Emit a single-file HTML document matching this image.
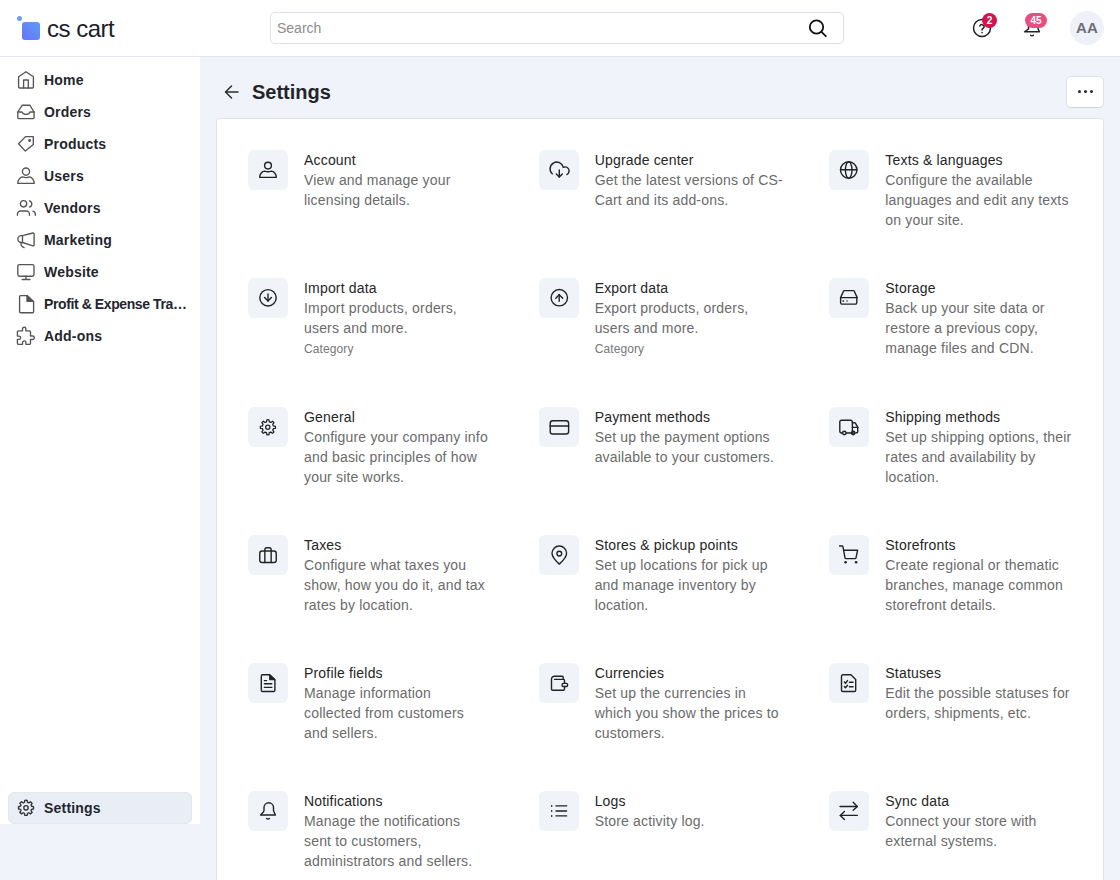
<!DOCTYPE html>
<html><head><meta charset="utf-8"><style>
*{box-sizing:border-box;margin:0;padding:0}
html,body{width:1120px;height:880px;overflow:hidden;background:#f0f3fa;font-family:"Liberation Sans",sans-serif;color:#222}
.a{position:absolute}
.hdr{left:0;top:0;width:1120px;height:57px;background:#fff;border-bottom:1px solid #e1e5ec}
.side{left:0;top:57px;width:200px;height:767px;background:#fff}
.nav{position:absolute;left:0;width:200px;height:32px}
.nav .ic{position:absolute;left:14px;top:4px;width:24px;height:24px;color:#555}
.nav svg{display:block}
.nav .tx{position:absolute;left:44px;top:0;line-height:32px;font-size:14px;font-weight:700;color:#23262e;white-space:nowrap;overflow:hidden;text-overflow:ellipsis;width:150px;letter-spacing:.2px}
.active{left:8px;top:792px;width:184px;height:32px;border-radius:6px;background:#e9eef6;border:1px solid #e3e8f0}
.card{left:216px;top:118px;width:888px;height:800px;background:#fff;border:1px solid #dfe2e8;border-radius:4px}
.it{position:absolute;width:243px;height:90px}
.ib{position:absolute;left:0;top:0;width:40px;height:40px;border-radius:6px;background:#f0f3f8;color:#222}
.ib svg{position:absolute;left:8px;top:8px}
.t{position:absolute;left:56px;top:0;font-size:14px;line-height:20px;white-space:nowrap;letter-spacing:.18px}
.ti{color:#262626}
.d{color:#6b6b6b}
.c{color:#777;font-size:12px;position:relative;top:1px;letter-spacing:.1px}
</style></head><body>
<div class="a hdr"></div>
<div class="a" style="left:16.6px;top:15.9px;width:5.6px;height:5.6px;border-radius:50%;background:#6d9bf7"></div>
<div class="a" style="left:22px;top:22px;width:18px;height:18px;border-radius:3px;background:linear-gradient(45deg,#6a72f5 0%,#5b9ef8 100%)"></div>
<div class="a" style="left:47px;top:14px;font-size:24px;line-height:30px;color:#1b1d2b;letter-spacing:-0.5px">cs cart</div>
<div class="a" style="left:270px;top:12px;width:574px;height:32px;border:1px solid #dde1e7;border-radius:5px;background:#fff"></div>
<div class="a" style="left:277px;top:12px;line-height:32px;font-size:14px;color:#8c8c8c">Search</div>
<svg class="a" style="left:807px;top:17px" width="22" height="22" viewBox="0 0 22 22" fill="none" stroke="#111" stroke-width="1.8" stroke-linecap="round"><circle cx="9.5" cy="10" r="6.7"/><path d="M14.4 14.9l4.4 4.3"/></svg>
<svg class="a" style="left:972px;top:18px" width="20" height="20" viewBox="0 0 20 20" fill="none" stroke="#222" stroke-width="1.5" stroke-linecap="round"><circle cx="10" cy="10" r="8.5"/><path d="M7.8 8a2.3 2.3 0 0 1 4.4.8c0 1.4-2.2 1.8-2.2 3.2"/><path d="M10 14.6v.1"/></svg>
<div class="a" style="left:982px;top:13px;width:15px;height:15px;border-radius:50%;background:#d4134f;color:#fff;font-size:10px;font-weight:700;line-height:15px;text-align:center">2</div>
<svg class="a" style="left:1022px;top:14px" width="20" height="24" viewBox="0 0 20 24" fill="none" stroke="#222" stroke-width="1.5" stroke-linecap="round" stroke-linejoin="round"><path d="M2.6 17.8h14.8l-1.3-2.8V10.5a4.8 4.8 0 0 0-9.6 0v4.5z"/><path d="M8.6 21.2q1.4 1.2 2.8 0"/></svg>
<div class="a" style="left:1025px;top:13px;width:22px;height:15px;border-radius:8px;background:#ec4d80;color:#fff;font-size:10px;font-weight:700;line-height:15px;text-align:center">45</div>
<div class="a" style="left:1070px;top:11px;width:34px;height:34px;border-radius:50%;background:#eef1f7;color:#6b6e73;font-size:15px;font-weight:700;line-height:34px;text-align:center;letter-spacing:.2px">AA</div>
<svg class="a" style="left:222px;top:82px" width="20" height="20" viewBox="0 0 20 20" fill="none" stroke="#2a2a2a" stroke-width="1.45" stroke-linecap="round" stroke-linejoin="round"><path d="M4 10h12"/><path d="M9.5 4L3.5 10l6 6"/></svg>
<div class="a" style="left:252px;top:78px;font-size:20px;font-weight:700;line-height:28px;color:#23252b">Settings</div>
<div class="a" style="left:1066px;top:76px;width:38px;height:32px;border:1px solid #dde1e8;border-bottom-color:#cfd4dc;border-radius:5px;background:#fff"></div>
<div class="a" style="left:1077.5px;top:90.3px;width:3.2px;height:3.2px;border-radius:50%;background:#2a2a2a;box-shadow:6px 0 0 #2a2a2a,12px 0 0 #2a2a2a"></div>

<div class="a side"></div>
<div class="nav" style="top:64px"><span class="ic"><svg width="24" height="24" viewBox="0 0 24 24" fill="none" stroke="currentColor" stroke-width="1.35" stroke-linecap="round" stroke-linejoin="round"><path d="M4.6 19V8.8L12 3.8l7.4 5V19a1 1 0 0 1-1 1H5.6a1 1 0 0 1-1-1z"/><path d="M9.6 20v-8h4.7v8"/></svg></span><span class="tx">Home</span></div>
<div class="nav" style="top:96px"><span class="ic"><svg width="24" height="24" viewBox="0 0 24 24" fill="none" stroke="currentColor" stroke-width="1.35" stroke-linecap="round" stroke-linejoin="round"><path d="M3.8 12l4.5-6.8h7.4l4.4 6.8v5.6a1 1 0 0 1-1 1H4.8a1 1 0 0 1-1-1z"/><path d="M3.8 12H8q1 2.4 4 2.4t4-2.4h4.1"/></svg></span><span class="tx">Orders</span></div>
<div class="nav" style="top:128px"><span class="ic"><svg width="24" height="24" viewBox="0 0 24 24" fill="none" stroke="currentColor" stroke-width="1.35" stroke-linecap="round" stroke-linejoin="round"><path d="M11.5 4.6h7.8v7.9l-8 6.6-6.7-7.4z"/><circle cx="15.6" cy="8.4" r=".8" fill="currentColor"/></svg></span><span class="tx">Products</span></div>
<div class="nav" style="top:160px"><span class="ic"><svg width="24" height="24" viewBox="0 0 24 24" fill="none" stroke="currentColor" stroke-width="1.35" stroke-linecap="round" stroke-linejoin="round"><circle cx="12" cy="7.6" r="3.6"/><path d="M3.8 19.4c0-3.6 2.5-6.5 4.9-6.5q3.3 1.4 6.6 0c2.4 0 4.9 2.9 4.9 6.5z"/></svg></span><span class="tx">Users</span></div>
<div class="nav" style="top:192px"><span class="ic"><svg width="24" height="24" viewBox="0 0 24 24" fill="none" stroke="currentColor" stroke-width="1.35" stroke-linecap="round" stroke-linejoin="round"><circle cx="9.55" cy="7.8" r="3.15"/><path d="M15.5 4.8a3.3 3.3 0 0 1 0 6.3"/><path d="M3.45 19.3V18a3 3 0 0 1 3-3h6a3 3 0 0 1 3 3v1.3"/><path d="M18.9 15.1a3.2 3.2 0 0 1 2.4 3.1v1.1"/></svg></span><span class="tx">Vendors</span></div>
<div class="nav" style="top:224px"><span class="ic"><svg width="24" height="24" viewBox="0 0 24 24" fill="none" stroke="currentColor" stroke-width="1.35" stroke-linecap="round" stroke-linejoin="round"><path d="M8.5 7.6l10.4-2.6a1 1 0 0 1 1.2 1v10.9a1 1 0 0 1-1.2 1L8.5 14.5z"/><path d="M8.5 7.6H7.3a3.45 3.45 0 0 0 0 6.9h1.2"/><path d="M6.9 14.6c0 2.6 1 4.4 3.2 5"/></svg></span><span class="tx">Marketing</span></div>
<div class="nav" style="top:256px"><span class="ic"><svg width="24" height="24" viewBox="0 0 24 24" fill="none" stroke="currentColor" stroke-width="1.35" stroke-linecap="round" stroke-linejoin="round"><rect x="3.8" y="4.6" width="16.2" height="11.6" rx="1.6"/><path d="M12 16.2v3.3M8.2 19.5h7.8"/></svg></span><span class="tx">Website</span></div>
<div class="nav" style="top:288px"><span class="ic"><svg width="24" height="24" viewBox="0 0 24 24" fill="none" stroke="currentColor" stroke-width="1.35" stroke-linecap="round" stroke-linejoin="round"><path d="M13 3.6H6.6a1 1 0 0 0-1 1v15.1a1 1 0 0 0 1 1h12a1 1 0 0 0 1-1V9.4z"/><path d="M13 3.6v5.8h5.9z" fill="currentColor"/></svg></span><span class="tx" style="letter-spacing:-0.4px;overflow:visible;width:auto">Profit &amp; Expense Tra…</span></div>
<div class="nav" style="top:320px"><span class="ic"><svg width="24" height="24" viewBox="0 0 24 24" fill="none" stroke="currentColor" stroke-width="1.35" stroke-linecap="round" stroke-linejoin="round"><path d="M4.6 6.9H8.5V4.95a1.7 1.7 0 0 1 3.4 0V6.9h3.4a1.2 1.2 0 0 1 1.2 1.2V12h2.05a1.75 1.75 0 0 1 0 3.5H16.5v3.6a1.2 1.2 0 0 1-1.2 1.2H11.9v-1.7a1.7 1.7 0 0 0-3.4 0v1.7H4.6a1.2 1.2 0 0 1-1.2-1.2v-3.7H5a1.65 1.65 0 0 0 0-3.3H3.4V8.1a1.2 1.2 0 0 1 1.2-1.2z"/></svg></span><span class="tx">Add-ons</span></div>
<div class="a active"></div>
<div class="nav" style="top:792px"><span class="ic" style="color:#333"><svg width="24" height="24" viewBox="0 0 24 24" fill="none" stroke="currentColor" stroke-width="1.35" stroke-linecap="round" stroke-linejoin="round"><path d="M10.45 6.31L10.82 4.34A7.55 7.55 0 0 1 13.18 4.34L13.55 6.31A5.7 5.7 0 0 1 14.79 6.83L16.44 5.69A7.55 7.55 0 0 1 18.11 7.36L16.97 9.01A5.7 5.7 0 0 1 17.49 10.25L19.46 10.62A7.55 7.55 0 0 1 19.46 12.98L17.49 13.35A5.7 5.7 0 0 1 16.97 14.59L18.11 16.24A7.55 7.55 0 0 1 16.44 17.91L14.79 16.77A5.7 5.7 0 0 1 13.55 17.29L13.18 19.26A7.55 7.55 0 0 1 10.82 19.26L10.45 17.29A5.7 5.7 0 0 1 9.21 16.77L7.56 17.91A7.55 7.55 0 0 1 5.89 16.24L7.03 14.59A5.7 5.7 0 0 1 6.51 13.35L4.54 12.98A7.55 7.55 0 0 1 4.54 10.62L6.51 10.25A5.7 5.7 0 0 1 7.03 9.01L5.89 7.36A7.55 7.55 0 0 1 7.56 5.69L9.21 6.83A5.7 5.7 0 0 1 10.45 6.31Z"/><circle cx="12" cy="11.8" r="2.2"/></svg></span><span class="tx">Settings</span></div>
<div class="a card"></div>
<div class="it" style="left:248px;top:150px"><div class="ib"><svg width="24" height="24" viewBox="0 0 24 24" fill="none" stroke="currentColor" stroke-width="1.4" stroke-linecap="round" stroke-linejoin="round"><circle cx="12" cy="7.6" r="3.4"/><path d="M3.7 19.4c0-3.5 2.5-6.3 4.9-6.3q3.4 1.3 6.8 0c2.4 0 4.9 2.8 4.9 6.3z"/></svg></div><div class="t"><div class="ti">Account</div><div class="d">View and manage your</div><div class="d">licensing details.</div></div></div>
<div class="it" style="left:538.67px;top:150px"><div class="ib"><svg width="24" height="24" viewBox="0 0 24 24" fill="none" stroke="currentColor" stroke-width="1.4" stroke-linecap="round" stroke-linejoin="round"><path d="M5.3 15.8A6.7 6.7 0 1 1 16.3 9.3A4 4 0 0 1 19.8 16.6"/><path d="M12.3 11.9V19"/><path d="M9.3 16.1l3 3 3-3"/></svg></div><div class="t"><div class="ti">Upgrade center</div><div class="d">Get the latest versions of CS-</div><div class="d">Cart and its add-ons.</div></div></div>
<div class="it" style="left:829.33px;top:150px"><div class="ib"><svg width="24" height="24" viewBox="0 0 24 24" fill="none" stroke="currentColor" stroke-width="1.4" stroke-linecap="round" stroke-linejoin="round"><circle cx="11.7" cy="12" r="8.2"/><path d="M3.5 11.8h16.4"/><ellipse cx="11.7" cy="12" rx="3.3" ry="8.2"/></svg></div><div class="t"><div class="ti">Texts &amp; languages</div><div class="d">Configure the available</div><div class="d">languages and edit any texts</div><div class="d">on your site.</div></div></div>
<div class="it" style="left:248px;top:278px"><div class="ib"><svg width="24" height="24" viewBox="0 0 24 24" fill="none" stroke="currentColor" stroke-width="1.4" stroke-linecap="round" stroke-linejoin="round"><circle cx="12" cy="11.8" r="8.2"/><path d="M12 8v7"/><path d="M8.6 11.5L12 14.9l3.4-3.4"/></svg></div><div class="t"><div class="ti">Import data</div><div class="d">Import products, orders,</div><div class="d">users and more.</div><div class="c">Category</div></div></div>
<div class="it" style="left:538.67px;top:278px"><div class="ib"><svg width="24" height="24" viewBox="0 0 24 24" fill="none" stroke="currentColor" stroke-width="1.4" stroke-linecap="round" stroke-linejoin="round"><circle cx="12.3" cy="11.7" r="8.2"/><path d="M12.2 15.3V8.4"/><path d="M8.8 12.2l3.4-3.5 3.5 3.5"/></svg></div><div class="t"><div class="ti">Export data</div><div class="d">Export products, orders,</div><div class="d">users and more.</div><div class="c">Category</div></div></div>
<div class="it" style="left:829.33px;top:278px"><div class="ib"><svg width="24" height="24" viewBox="0 0 24 24" fill="none" stroke="currentColor" stroke-width="1.4" stroke-linecap="round" stroke-linejoin="round"><path d="M3.6 11.6L6.5 5.2a1 1 0 0 1 .9-.6h9a1 1 0 0 1 .9.6l2.9 6.4"/><path d="M3.6 11.6h16.2v5a1.5 1.5 0 0 1-1.5 1.5H5.1a1.5 1.5 0 0 1-1.5-1.5z"/><path d="M6 15h.6M10 15h.1"/></svg></div><div class="t"><div class="ti">Storage</div><div class="d">Back up your site data or</div><div class="d">restore a previous copy,</div><div class="d">manage files and CDN.</div></div></div>
<div class="it" style="left:248px;top:407px"><div class="ib"><svg width="24" height="24" viewBox="0 0 24 24" fill="none" stroke="currentColor" stroke-width="1.4" stroke-linecap="round" stroke-linejoin="round"><path d="M10.51 6.88L10.89 4.77A7.6 7.6 0 0 1 12.91 4.77L13.29 6.88A5.6 5.6 0 0 1 14.75 7.48L16.51 6.26A7.6 7.6 0 0 1 17.94 7.69L16.72 9.45A5.6 5.6 0 0 1 17.32 10.91L19.43 11.29A7.6 7.6 0 0 1 19.43 13.31L17.32 13.69A5.6 5.6 0 0 1 16.72 15.15L17.94 16.91A7.6 7.6 0 0 1 16.51 18.34L14.75 17.12A5.6 5.6 0 0 1 13.29 17.72L12.91 19.83A7.6 7.6 0 0 1 10.89 19.83L10.51 17.72A5.6 5.6 0 0 1 9.05 17.12L7.29 18.34A7.6 7.6 0 0 1 5.86 16.91L7.08 15.15A5.6 5.6 0 0 1 6.48 13.69L4.37 13.31A7.6 7.6 0 0 1 4.37 11.29L6.48 10.91A5.6 5.6 0 0 1 7.08 9.45L5.86 7.69A7.6 7.6 0 0 1 7.29 6.26L9.05 7.48A5.6 5.6 0 0 1 10.51 6.88Z" stroke-width="1.25"/><circle cx="11.8" cy="12.3" r="2.1" stroke-width="1.25"/></svg></div><div class="t"><div class="ti">General</div><div class="d">Configure your company info</div><div class="d">and basic principles of how</div><div class="d">your site works.</div></div></div>
<div class="it" style="left:538.67px;top:407px"><div class="ib"><svg width="24" height="24" viewBox="0 0 24 24" fill="none" stroke="currentColor" stroke-width="1.4" stroke-linecap="round" stroke-linejoin="round"><rect x="3.2" y="5.8" width="18.4" height="13.2" rx="2.6"/><path d="M3.2 11h18.4"/></svg></div><div class="t"><div class="ti">Payment methods</div><div class="d">Set up the payment options</div><div class="d">available to your customers.</div></div></div>
<div class="it" style="left:829.33px;top:407px"><div class="ib"><svg width="24" height="24" viewBox="0 0 24 24" fill="none" stroke="currentColor" stroke-width="1.4" stroke-linecap="round" stroke-linejoin="round"><path d="M5.7 18H4.8a2 2 0 0 1-2-2V7a1.8 1.8 0 0 1 1.8-1.8h9a1.8 1.8 0 0 1 1.8 1.8v11H9"/><path d="M14.5 18H18"/><path d="M15.4 7.7h2.1a1 1 0 0 1 .9.5l2.3 4v4.6a1 1 0 0 1-1 1h-.5"/><path d="M15.4 12.4h5.4"/><circle cx="7.3" cy="18" r="1.7"/><circle cx="16.2" cy="18" r="1.7"/></svg></div><div class="t"><div class="ti">Shipping methods</div><div class="d">Set up shipping options, their</div><div class="d">rates and availability by</div><div class="d">location.</div></div></div>
<div class="it" style="left:248px;top:535px"><div class="ib"><svg width="24" height="24" viewBox="0 0 24 24" fill="none" stroke="currentColor" stroke-width="1.4" stroke-linecap="round" stroke-linejoin="round"><rect x="3.75" y="7.95" width="16.5" height="11.6" rx="2.3"/><path d="M8.85 19.5V6.8a2 2 0 0 1 2-2h2.3a2 2 0 0 1 2 2v12.7"/></svg></div><div class="t"><div class="ti">Taxes</div><div class="d">Configure what taxes you</div><div class="d">show, how you do it, and tax</div><div class="d">rates by location.</div></div></div>
<div class="it" style="left:538.67px;top:535px"><div class="ib"><svg width="24" height="24" viewBox="0 0 24 24" fill="none" stroke="currentColor" stroke-width="1.4" stroke-linecap="round" stroke-linejoin="round"><circle cx="12.3" cy="10.6" r="2.4"/><path d="M12.3 21.1C9 18.2 5 14.6 5 10.3a7.3 7.3 0 0 1 14.6 0c0 4.3-4 7.9-7.3 10.8z"/></svg></div><div class="t"><div class="ti">Stores &amp; pickup points</div><div class="d">Set up locations for pick up</div><div class="d">and manage inventory by</div><div class="d">location.</div></div></div>
<div class="it" style="left:829.33px;top:535px"><div class="ib"><svg width="24" height="24" viewBox="0 0 24 24" fill="none" stroke="currentColor" stroke-width="1.4" stroke-linecap="round" stroke-linejoin="round"><path d="M2.6 3h2.4a1 1 0 0 1 1 .8L8 14.8a1 1 0 0 0 1 .8h9a1 1 0 0 0 1-.8l1.6-7.6H6.8"/><circle cx="8.6" cy="19.3" r="1.3" fill="currentColor" stroke="none"/><circle cx="19.1" cy="19.3" r="1.3" fill="currentColor" stroke="none"/></svg></div><div class="t"><div class="ti">Storefronts</div><div class="d">Create regional or thematic</div><div class="d">branches, manage common</div><div class="d">storefront details.</div></div></div>
<div class="it" style="left:248px;top:663px"><div class="ib"><svg width="24" height="24" viewBox="0 0 24 24" fill="none" stroke="currentColor" stroke-width="1.4" stroke-linecap="round" stroke-linejoin="round"><path d="M13.6 3.75H6.6a1.3 1.3 0 0 0-1.3 1.3v14.1a1.3 1.3 0 0 0 1.3 1.3h11a1.3 1.3 0 0 0 1.3-1.3V8.9z"/><path d="M13.8 3.9v4.7h5z" fill="currentColor"/><path d="M8.4 9.6h2.2M8.4 12.8h7.4M8.4 16.4h7.4"/></svg></div><div class="t"><div class="ti">Profile fields</div><div class="d">Manage information</div><div class="d">collected from customers</div><div class="d">and sellers.</div></div></div>
<div class="it" style="left:538.67px;top:663px"><div class="ib"><svg width="24" height="24" viewBox="0 0 24 24" fill="none" stroke="currentColor" stroke-width="1.4" stroke-linecap="round" stroke-linejoin="round"><path d="M17.5 12.3V9.4a1 1 0 0 0-1-1H7.6"/><path d="M16.2 8.2V6.2a1 1 0 0 0-1-1H7.6a3.1 3.1 0 0 0-3.1 3.1v9.8a1.2 1.2 0 0 0 1.2 1.2h10.6a1.2 1.2 0 0 0 1.2-1.2v-2.4"/><rect x="15.1" y="12.4" width="5.5" height="3.1" rx="1.2"/></svg></div><div class="t"><div class="ti">Currencies</div><div class="d">Set up the currencies in</div><div class="d">which you show the prices to</div><div class="d">customers.</div></div></div>
<div class="it" style="left:829.33px;top:663px"><div class="ib"><svg width="24" height="24" viewBox="0 0 24 24" fill="none" stroke="currentColor" stroke-width="1.4" stroke-linecap="round" stroke-linejoin="round"><path d="M13.9 3.8H5.8a1.3 1.3 0 0 0-1.3 1.3v14.1a1.3 1.3 0 0 0 1.3 1.3h11.6a1.3 1.3 0 0 0 1.3-1.3V8.6z"/><path d="M7.3 11l1.2 1.2 2-2.6M7.3 15.6l1.2 1.2 2-2.6M12.4 11.3h3.7M12.4 15.8h3.7"/></svg></div><div class="t"><div class="ti">Statuses</div><div class="d">Edit the possible statuses for</div><div class="d">orders, shipments, etc.</div></div></div>
<div class="it" style="left:248px;top:791px"><div class="ib"><svg width="24" height="24" viewBox="0 0 24 24" fill="none" stroke="currentColor" stroke-width="1.4" stroke-linecap="round" stroke-linejoin="round"><path d="M4.6 16h14.8l-1.5-3.2a4 4 0 0 1-.4-1.7V8.5a4.75 4.75 0 0 0-9.5 0v2.6a4 4 0 0 1-.4 1.7z"/><path d="M10.6 19.5q1.4 1.2 2.8 0"/></svg></div><div class="t"><div class="ti">Notifications</div><div class="d">Manage the notifications</div><div class="d">sent to customers,</div><div class="d">administrators and sellers.</div></div></div>
<div class="it" style="left:538.67px;top:791px"><div class="ib"><svg width="24" height="24" viewBox="0 0 24 24" fill="none" stroke="currentColor" stroke-width="1.4" stroke-linecap="round" stroke-linejoin="round"><path d="M9 6.9h10.6M9 12h10.6M9 16.9h10.6"/><path d="M4.7 6.6v.6M4.7 11.7v.6M4.7 16.6v.6"/></svg></div><div class="t"><div class="ti">Logs</div><div class="d">Store activity log.</div></div></div>
<div class="it" style="left:829.33px;top:791px"><div class="ib"><svg width="24" height="24" viewBox="0 0 24 24" fill="none" stroke="currentColor" stroke-width="1.4" stroke-linecap="round" stroke-linejoin="round"><path d="M3.1 7.45h17.1"/><path d="M16.2 3.3l4.1 4.15-4.1 3.9"/><path d="M20.3 16.4H3.3"/><path d="M7.4 12.5l-4.1 3.9 4.1 4.1"/></svg></div><div class="t"><div class="ti">Sync data</div><div class="d">Connect your store with</div><div class="d">external systems.</div></div></div>
</body></html>
